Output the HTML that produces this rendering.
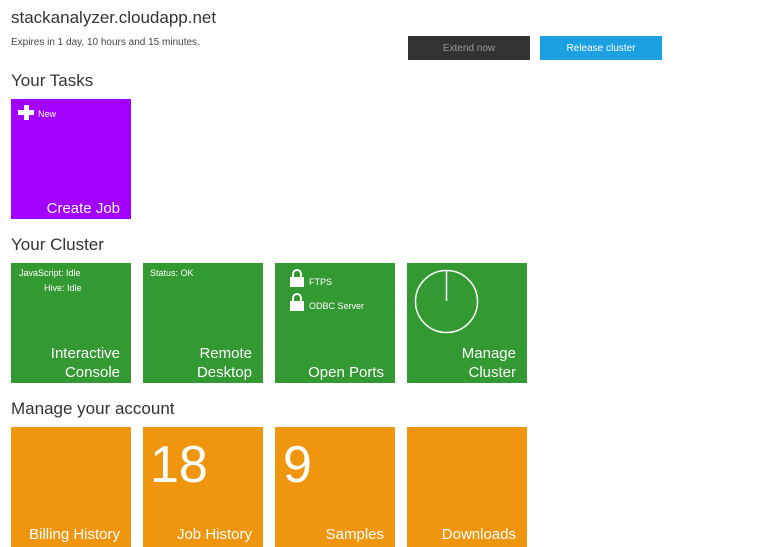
<!DOCTYPE html>
<html><head><style>
body{margin:0;width:766px;height:544px;overflow:hidden;background:#fff;font-family:"Liberation Sans",sans-serif;position:relative;color:#333}
.a{position:absolute}
.t{position:absolute;width:120px;height:120px;color:#fff}
.g{background:#339933}.o{background:#f0960e}
.lbl{position:absolute;right:11px;bottom:1px;font-size:15px;text-align:right;line-height:19px}
.s{font-size:9px;position:absolute}
h2{position:absolute;margin:0;font-weight:normal;font-size:17px;color:#333}
.btn{position:absolute;top:36px;width:122px;height:24px;font-size:10px;display:flex;align-items:center;justify-content:center}
.lock{position:absolute;width:14px;height:10px;background:#fff}
.lock:before{content:"";position:absolute;left:2px;top:-8px;width:6px;height:8px;border:2px solid #fff;border-bottom:none;border-radius:5px 5px 0 0}
</style></head><body>
<div class="a" style="left:11px;top:8px;font-size:17px">stackanalyzer.cloudapp.net</div>
<div class="a" style="left:11px;top:37px;font-size:10px;color:#444">Expires in 1 day, 10 hours and 15 minutes.</div>
<div class="btn" style="left:408px;background:#333;color:#999">Extend now</div>
<div class="btn" style="left:540px;background:#1ba1e2;color:#fff">Release cluster</div>
<h2 style="left:11px;top:71px">Your Tasks</h2>
<div class="t" style="left:11px;top:99px;background:#a200ff">
<div class="a" style="left:7px;top:11px;width:16px;height:5px;background:#fff"></div>
<div class="a" style="left:12.5px;top:6px;width:5px;height:15px;background:#fff"></div>
<div class="s" style="left:27px;top:10px">New</div>
<div class="lbl">Create Job</div></div>
<h2 style="left:11px;top:235px">Your Cluster</h2>
<div class="t g" style="left:11px;top:263px"><div class="s" style="left:8px;top:5px">JavaScript: Idle</div><div class="s" style="left:33px;top:20px">Hive: Idle</div><div class="lbl">Interactive<br>Console</div></div>
<div class="t g" style="left:143px;top:263px"><div class="s" style="left:7px;top:5px">Status: OK</div><div class="lbl">Remote<br>Desktop</div></div>
<div class="t g" style="left:275px;top:263px"><div class="lock" style="left:15px;top:14px"></div><div class="s" style="left:34px;top:14px">FTPS</div><div class="lock" style="left:15px;top:38px"></div><div class="s" style="left:34px;top:38px">ODBC Server</div><div class="lbl">Open Ports</div></div>
<div class="t g" style="left:407px;top:263px"><svg class="a" style="left:0;top:0" width="80" height="80"><circle cx="39.5" cy="38.5" r="31" fill="none" stroke="#fff" stroke-width="1.5"/><line x1="39.5" y1="7" x2="39.5" y2="38" stroke="#fff" stroke-width="1.5"/></svg><div class="lbl">Manage<br>Cluster</div></div>
<h2 style="left:11px;top:399px">Manage your account</h2>
<div class="t o" style="left:11px;top:427px"><div class="lbl" style="bottom:3px">Billing History</div></div>
<div class="t o" style="left:143px;top:427px"><div class="a" style="left:7px;top:8px;font-size:52px;line-height:60px">18</div><div class="lbl" style="bottom:3px">Job History</div></div>
<div class="t o" style="left:275px;top:427px"><div class="a" style="left:8px;top:8px;font-size:52px;line-height:60px">9</div><div class="lbl" style="bottom:3px">Samples</div></div>
<div class="t o" style="left:407px;top:427px"><div class="lbl" style="bottom:3px">Downloads</div></div>
</body></html>
